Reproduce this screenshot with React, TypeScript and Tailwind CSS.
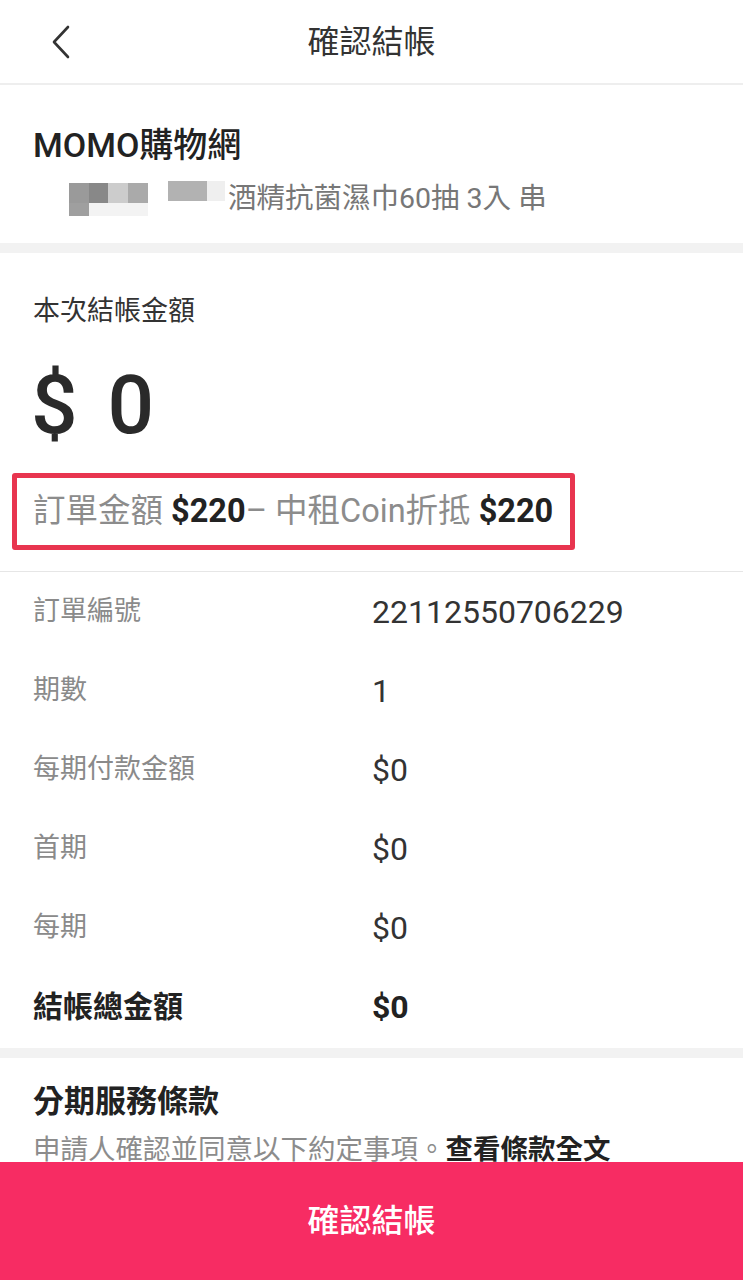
import React from "react";

const FONT = "font-['Roboto','Noto_Sans_CJK_TC',sans-serif]";

function Row({ label, value, bold }: { label: string; value: string; bold?: boolean }) {
  return (
    <div className="grid grid-cols-[339px_1fr] h-[79px] items-center px-[33px]">
      <div
        className={
          bold
            ? "text-[30px] font-bold text-[#222222] leading-none"
            : "text-[27px] text-[#8a8a8a] leading-none"
        }
      >
        {label}
      </div>
      <div
        className={
          bold
            ? "text-[32px] font-bold text-[#222222] leading-none"
            : "text-[32px] text-[#333333] leading-none"
        }
      >
        {value}
      </div>
    </div>
  );
}

export default function App() {
  return (
    <div className={`${FONT} relative w-[743px] min-h-[1280px] bg-white overflow-hidden`}>
      {/* Header */}
      <div className="grid grid-cols-[120px_1fr_120px] h-[85px] items-center border-b-2 border-[#eeeeee]">
        <div className="pl-[46px] flex items-center">
          <svg width="30" height="36" viewBox="0 0 30 36" fill="none">
            <path d="M22 3 L8 18 L22 33" stroke="#333333" strokeWidth="2.6" strokeLinecap="round" strokeLinejoin="round" />
          </svg>
        </div>
        <div className="text-center text-[32px] text-[#333333] leading-none">確認結帳</div>
        <div />
      </div>

      {/* Merchant */}
      <div className="px-[33px] pt-[40px] pb-[26px]">
        <div className="text-[34px] font-medium text-[#222222] leading-[40px]">MOMO購物網</div>
        <div className="flex items-center mt-[16px] h-[36px]">
          <div className="flex flex-col ml-[36px] blur-[0.6px]">
            <div className="flex">
              <div className="w-[20px] h-[20px] bg-[#9a9a9a]" />
              <div className="w-[19px] h-[20px] bg-[#888888]" />
              <div className="w-[20px] h-[20px] bg-[#cccccc]" />
              <div className="w-[20px] h-[20px] bg-[#aaaaaa]" />
            </div>
            <div className="flex">
              <div className="w-[20px] h-[13px] bg-[#9f9f9f]" />
              <div className="w-[59px] h-[13px] bg-[#f3f3f3]" />
            </div>
          </div>
          <div className="flex flex-col ml-[20px] self-start blur-[0.6px]">
            <div className="flex">
              <div className="w-[39px] h-[20px] bg-[#b2b2b2]" />
              <div className="w-[18px] h-[20px] bg-[#efefef]" />
            </div>
          </div>
          <div className="ml-[3px] text-[28.5px] text-[#777777] leading-none whitespace-nowrap">
            酒精抗菌濕巾60抽 3入 串
          </div>
        </div>
      </div>

      <div className="h-[10px] bg-[#f2f2f2]" />

      {/* Amount */}
      <div className="pt-[40px]">
        <div className="px-[33px] text-[27px] text-[#333333] leading-[36px]">本次結帳金額</div>
        <div className="px-[31px] mt-[30px] text-[82px] font-medium text-[#2a2a2a] leading-[92px] whitespace-nowrap">
          <span>$</span>
          <span className="ml-[30px]">0</span>
        </div>
        <div className="mx-[12px] mt-[22px] w-[563px] h-[77px] border-[5px] border-[#e8354f] rounded-[3px] flex items-center pl-[16px]">
          <span className="text-[32.5px] text-[#8c8c8c] leading-none whitespace-nowrap">
            訂單金額 <span className="font-bold text-[#222222]">$220</span>– 中租Coin折抵{" "}
            <span className="font-bold text-[#222222]">$220</span>
          </span>
        </div>
        <div className="mt-[21px] h-[1px] bg-[#e6e6e6]" />
      </div>

      {/* Rows */}
      <div>
        <Row label="訂單編號" value="22112550706229" />
        <Row label="期數" value="1" />
        <Row label="每期付款金額" value="$0" />
        <Row label="首期" value="$0" />
        <Row label="每期" value="$0" />
        <Row label="結帳總金額" value="$0" bold />
      </div>

      <div className="mt-[2px] h-[10px] bg-[#f2f2f2]" />

      {/* Terms */}
      <div className="px-[33px] pt-[24px]">
        <div className="text-[31px] font-bold text-[#222222] leading-[40px]">分期服務條款</div>
        <div className="mt-[10px] text-[27.5px] text-[#8c8c8c] leading-[36px] whitespace-nowrap">
          申請人確認並同意以下約定事項。<span className="font-bold text-[#222222]">查看條款全文</span>
        </div>
      </div>

      {/* Bottom button */}
      <div className="fixed left-0 bottom-0 w-[743px] h-[118px] bg-[#f72c63] flex items-center justify-center">
        <span className="text-[32px] font-medium text-white leading-none">確認結帳</span>
      </div>
    </div>
  );
}
